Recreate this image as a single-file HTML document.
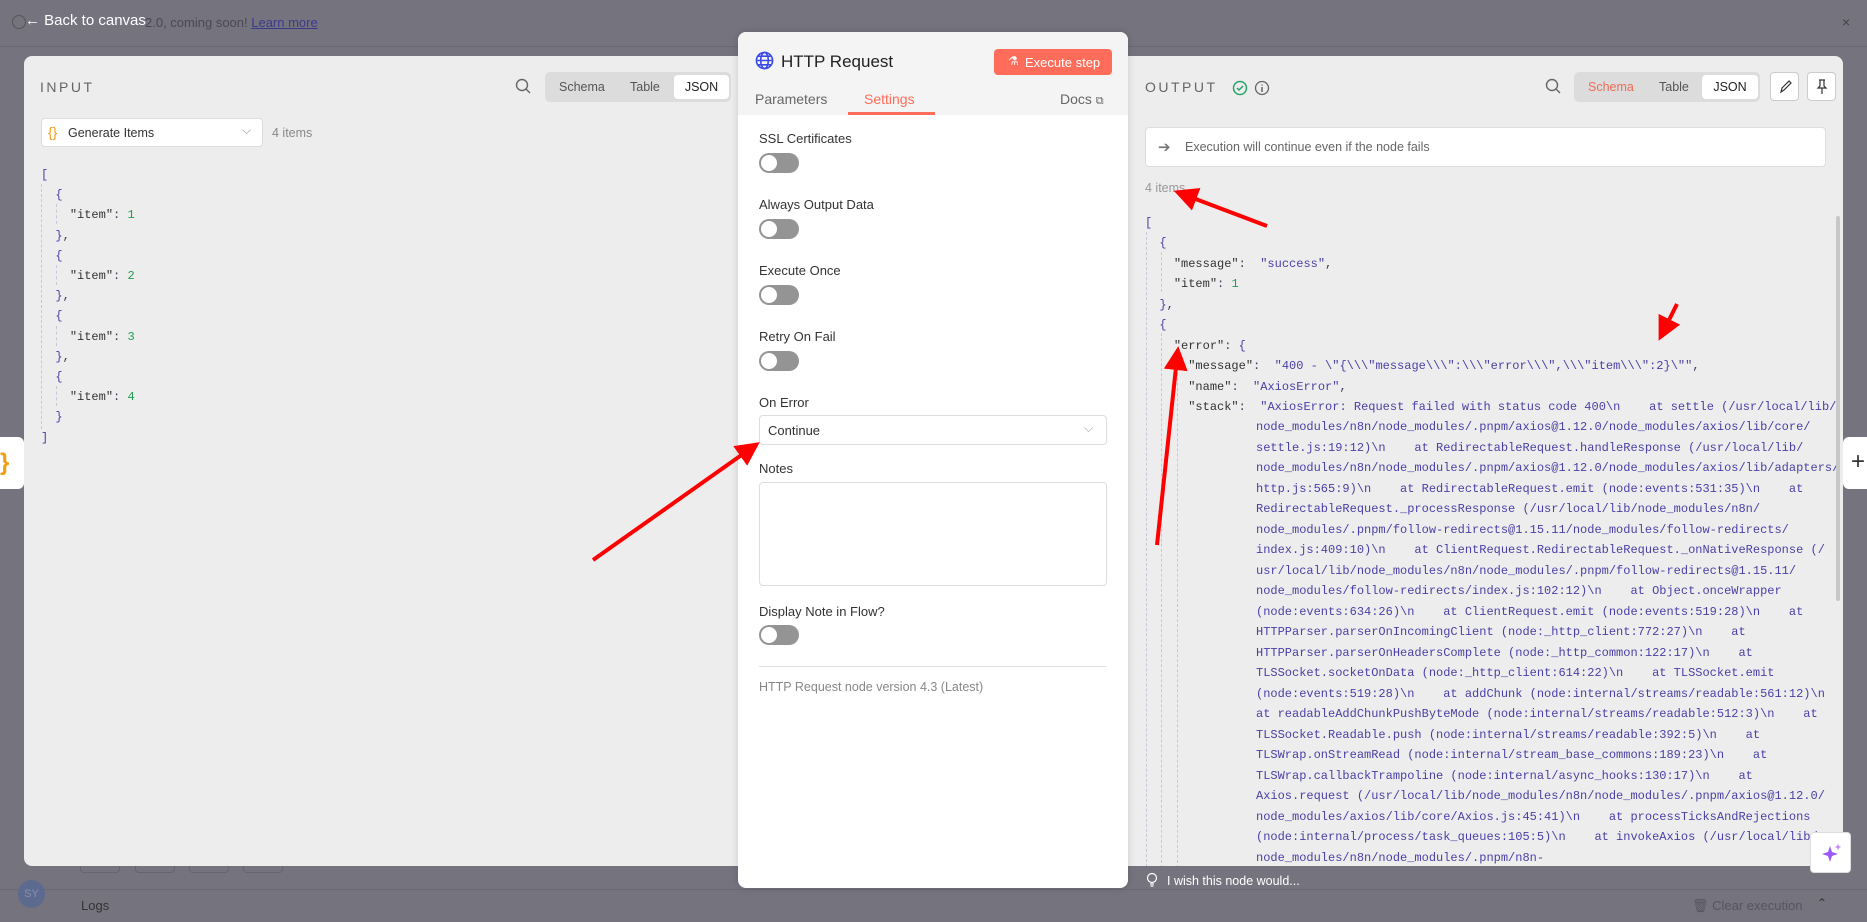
<!DOCTYPE html>
<html><head><meta charset="utf-8"><style>
*{box-sizing:border-box;margin:0;padding:0}
body{width:1867px;height:922px;overflow:hidden;background:#75737e;font-family:"Liberation Sans",sans-serif;position:relative;color:#333}
.a{position:absolute}
.mono{font-family:"Liberation Mono",monospace;font-size:12px;white-space:pre;color:#3d3d5c}
.p{color:#4a3fa6}.g{color:#1f9d55}.k{color:#333}
.tg{position:absolute;width:40px;height:20px;border-radius:10px;background:#949494}
.tg:after{content:"";position:absolute;left:2px;top:2px;width:16px;height:16px;border-radius:50%;background:#fff}
.lbl{position:absolute;left:21px;font-size:13px;color:#333}
.seg{position:absolute;height:30px;background:#dcdcdc;border-radius:5px;font-size:12.5px;color:#555}
.seg span{position:absolute;top:8px}
.seg .on{background:#fff;border-radius:4px;top:3px;height:24px;padding-top:5px;color:#222;text-align:center}
.dash{position:absolute;border-left:1px dashed #c5c8d6;width:0}
</style></head><body>
<div class="a" style="left:0;top:0;width:1867px;height:47px;border-bottom:1px solid #6a6873"></div>
<div class="a" style="left:12px;top:15px;width:14px;height:14px;border:1px solid #555;border-radius:50%"></div>
<div class="a" style="left:145px;top:15px;font-size:13px;color:#4a4855">2.0, coming soon! <span style="text-decoration:underline;color:#3b3a8a">Learn more</span></div>
<div class="a" style="left:25px;top:12px;font-size:15px;color:#fff">&#8592; Back to canvas</div>
<div class="a" style="left:1842px;top:14px;font-size:14px;color:#444">×</div>
<div class="a" style="left:0;top:437px;width:24px;height:52px;background:#fff;border-radius:0 6px 6px 0"><span style="position:absolute;left:0;top:12px;color:#f39c12;font-size:24px;font-weight:bold">}</span></div>
<div class="a" style="left:1843px;top:437px;width:24px;height:52px;background:#fff;border-radius:6px 0 0 6px"><span style="position:absolute;left:8px;top:11px;color:#333;font-size:24px">+</span></div>
<div class="a" style="left:0;top:889px;width:1867px;border-top:1px solid #6a6873"></div>
<div class="a" style="left:18px;top:880px;width:27px;height:28px;border-radius:50%;background:#5b6a8e;color:#8a8fb0;font-size:11px;text-align:center;line-height:28px">SY</div>
<div class="a" style="left:81px;top:898px;font-size:13px;color:#333">Logs</div>
<div class="a" style="left:1692px;top:898px;font-size:13px;color:#56545f">🗑 Clear execution</div>
<div class="a" style="left:1817px;top:896px;font-size:12px;color:#333">⌃</div>
<div class="a" style="left:80px;top:860px;width:40px;height:13px;border:1px solid #66646f;border-top:none;border-radius:0 0 4px 4px"></div>
<div class="a" style="left:135px;top:860px;width:40px;height:13px;border:1px solid #66646f;border-top:none;border-radius:0 0 4px 4px"></div>
<div class="a" style="left:189px;top:860px;width:40px;height:13px;border:1px solid #66646f;border-top:none;border-radius:0 0 4px 4px"></div>
<div class="a" style="left:243px;top:860px;width:40px;height:13px;border:1px solid #66646f;border-top:none;border-radius:0 0 4px 4px"></div>

<div class="a" style="left:24px;top:56px;width:720px;height:810px;background:#ededed;border-radius:8px 0 0 8px;overflow:hidden">
  <div class="a" style="left:16px;top:23px;font-size:14px;letter-spacing:2.5px;color:#666">INPUT</div>
  <svg class="a" style="left:491px;top:22px" width="16" height="16" viewBox="0 0 16 16"><circle cx="7" cy="7" r="5.5" fill="none" stroke="#666" stroke-width="1.4"/><path d="M11 11l4 4" stroke="#666" stroke-width="1.4"/></svg>
  <div class="seg" style="left:521px;top:16px;width:186px"><span style="left:14px">Schema</span><span style="left:85px">Table</span><span class="on" style="left:129px;width:55px">JSON</span></div>
  <div class="a" style="left:17px;top:62px;width:222px;height:29px;background:#fff;border:1px solid #ddd;border-radius:4px">
    <span class="a" style="left:6px;top:5px;color:#f39c12;font-size:14px">{}</span>
    <span class="a" style="left:26px;top:7px;font-size:12.5px;color:#333">Generate Items</span>
    <span class="a" style="left:200px;top:4px;color:#999;font-size:12px">⌵</span>
  </div>
  <div class="a" style="left:248px;top:70px;font-size:12.5px;color:#888">4 items</div>
  <div class="dash" style="left:17px;top:128px;height:245px"></div>
  <div class="dash" style="left:32px;top:148px;height:20px"></div>
  <div class="dash" style="left:32px;top:209px;height:20px"></div>
  <div class="dash" style="left:32px;top:270px;height:20px"></div>
  <div class="dash" style="left:32px;top:330px;height:20px"></div>
  <div class="a mono" style="left:17px;top:109px;line-height:20.2px"><span class="p">[</span>
  <span class="p">{</span>
    <span class="k">"item"</span>: <span class="g">1</span>
  <span class="p">}</span>,
  <span class="p">{</span>
    <span class="k">"item"</span>: <span class="g">2</span>
  <span class="p">}</span>,
  <span class="p">{</span>
    <span class="k">"item"</span>: <span class="g">3</span>
  <span class="p">}</span>,
  <span class="p">{</span>
    <span class="k">"item"</span>: <span class="g">4</span>
  <span class="p">}</span>
<span class="p">]</span></div>
</div>

<div class="a" style="left:1128px;top:56px;width:715px;height:810px;background:#ededed;border-radius:0 8px 0 0;overflow:hidden">
  <div class="a" style="left:17px;top:23px;font-size:14px;letter-spacing:2.5px;color:#666">OUTPUT</div>
  <svg class="a" style="left:104px;top:24px" width="16" height="16"><circle cx="8" cy="8" r="6.5" fill="none" stroke="#29a36a" stroke-width="1.5"/><path d="M5 8l2 2 4-4" fill="none" stroke="#29a36a" stroke-width="1.5"/></svg>
  <svg class="a" style="left:126px;top:24px" width="16" height="16"><circle cx="8" cy="8" r="6.5" fill="none" stroke="#666" stroke-width="1.3"/><path d="M8 7v5M8 4.5v1" stroke="#666" stroke-width="1.5"/></svg>
  <svg class="a" style="left:417px;top:22px" width="16" height="16" viewBox="0 0 16 16"><circle cx="7" cy="7" r="5.5" fill="none" stroke="#666" stroke-width="1.4"/><path d="M11 11l4 4" stroke="#666" stroke-width="1.4"/></svg>
  <div class="seg" style="left:446px;top:16px;width:186px"><span style="left:14px;color:#f06a55">Schema</span><span style="left:85px">Table</span><span class="on" style="left:128px;width:56px">JSON</span></div>
  <div class="a" style="left:642px;top:16px;width:29px;height:29px;border:1px solid #ccc;border-radius:4px;background:#fff"><svg class="a" style="left:7px;top:6px" width="14" height="16"><path d="M3 13l1-4 7-7 2 2-7 7z" fill="none" stroke="#333" stroke-width="1.2"/></svg></div>
  <div class="a" style="left:679px;top:16px;width:29px;height:29px;border:1px solid #ccc;border-radius:4px;background:#fff"><svg class="a" style="left:7px;top:6px" width="14" height="16"><path d="M4 1h6M5 1v6l-2 2h8l-2-2V1M7 9v6" fill="none" stroke="#333" stroke-width="1.2"/></svg></div>
  <div class="a" style="left:17px;top:71px;width:681px;height:40px;background:#fff;border:1px solid #ddd;border-radius:4px">
    <span class="a" style="left:12px;top:10px;color:#777;font-size:15px">➔</span>
    <span class="a" style="left:39px;top:12px;font-size:12.5px;color:#666">Execution will continue even if the node fails</span>
  </div>
  <div class="a" style="left:17px;top:125px;font-size:12.5px;color:#999">4 items</div>
  <div class="dash" style="left:18px;top:176px;height:640px"></div>
  <div class="dash" style="left:33px;top:196px;height:40px"></div>
  <div class="dash" style="left:33px;top:277px;height:540px"></div>
  <div class="dash" style="left:49px;top:297px;height:520px"></div>
  <div class="a mono" style="left:17px;top:157px;line-height:20.45px"><span class="p">[</span>
  <span class="p">{</span>
    <span class="k">"message"</span>:  <span class="p">"success"</span>,
    <span class="k">"item"</span>: <span class="g">1</span>
  <span class="p">}</span>,
  <span class="p">{</span>
    <span class="k">"error"</span>: <span class="p">{</span>
      <span class="k">"message"</span>:  <span class="p">"400 - \"{\\\"message\\\":\\\"error\\\",\\\"item\\\":2}\""</span>,
      <span class="k">"name"</span>:  <span class="p">"AxiosError"</span>,
      <span class="k">"stack"</span>:  <span class="p">"AxiosError: Request failed with status code 400\n    at settle (/usr/local/lib/</span></div>
  <div class="a mono p" style="left:128px;top:361px;line-height:20.5px">node_modules/n8n/node_modules/.pnpm/axios@1.12.0/node_modules/axios/lib/core/
settle.js:19:12)\n    at RedirectableRequest.handleResponse (/usr/local/lib/
node_modules/n8n/node_modules/.pnpm/axios@1.12.0/node_modules/axios/lib/adapters/
http.js:565:9)\n    at RedirectableRequest.emit (node:events:531:35)\n    at
RedirectableRequest._processResponse (/usr/local/lib/node_modules/n8n/
node_modules/.pnpm/follow-redirects@1.15.11/node_modules/follow-redirects/
index.js:409:10)\n    at ClientRequest.RedirectableRequest._onNativeResponse (/
usr/local/lib/node_modules/n8n/node_modules/.pnpm/follow-redirects@1.15.11/
node_modules/follow-redirects/index.js:102:12)\n    at Object.onceWrapper
(node:events:634:26)\n    at ClientRequest.emit (node:events:519:28)\n    at
HTTPParser.parserOnIncomingClient (node:_http_client:772:27)\n    at
HTTPParser.parserOnHeadersComplete (node:_http_common:122:17)\n    at
TLSSocket.socketOnData (node:_http_client:614:22)\n    at TLSSocket.emit
(node:events:519:28)\n    at addChunk (node:internal/streams/readable:561:12)\n
at readableAddChunkPushByteMode (node:internal/streams/readable:512:3)\n    at
TLSSocket.Readable.push (node:internal/streams/readable:392:5)\n    at
TLSWrap.onStreamRead (node:internal/stream_base_commons:189:23)\n    at
TLSWrap.callbackTrampoline (node:internal/async_hooks:130:17)\n    at
Axios.request (/usr/local/lib/node_modules/n8n/node_modules/.pnpm/axios@1.12.0/
node_modules/axios/lib/core/Axios.js:45:41)\n    at processTicksAndRejections
(node:internal/process/task_queues:105:5)\n    at invokeAxios (/usr/local/lib/
node_modules/n8n/node_modules/.pnpm/n8n-</div>
  <div class="a" style="left:708px;top:160px;width:4px;height:385px;background:#c8c8c8;border-radius:2px"></div>
</div>
<svg class="a" style="left:1146px;top:872px" width="12" height="16"><circle cx="6" cy="6" r="4.5" fill="none" stroke="#fff" stroke-width="1.2"/><path d="M4 12h4M4.5 14h3" stroke="#fff" stroke-width="1.2"/></svg>
<div class="a" style="left:1167px;top:874px;font-size:12.5px;color:#fff">I wish this node would...</div>
<div class="a" style="left:1810px;top:832px;width:41px;height:41px;background:#fff;border-radius:4px;border:1px solid #ddd"><svg class="a" style="left:10px;top:10px" width="22" height="22"><path d="M9 3l2 6 6 2-6 2-2 6-2-6-6-2 6-2z" fill="#9b59f5"/><path d="M17 1l1 2 2 1-2 1-1 2-1-2-2-1 2-1z" fill="#c08cf7"/></svg></div>

<div class="a" style="left:738px;top:32px;width:390px;height:856px;background:#fff;border-radius:8px;overflow:hidden;box-shadow:0 0 8px rgba(0,0,0,.15)">
  <div class="a" style="left:0;top:0;width:390px;height:83px;background:#f4f4f4"></div>
  <svg class="a" style="left:17px;top:19px" width="19" height="19" viewBox="0 0 20 20"><g fill="none" stroke="#3b4be8" stroke-width="1.7"><circle cx="10" cy="10" r="8.5"/><ellipse cx="10" cy="10" rx="4" ry="8.5"/><path d="M1.5 10h17M3 5.5h14M3 14.5h14"/></g></svg>
  <div class="a" style="left:43px;top:20px;font-size:17px;color:#222">HTTP Request</div>
  <div class="a" style="left:256px;top:17px;width:118px;height:26px;background:#ff6d5a;border-radius:4px;color:#fff;font-size:13px;padding:6px 0 0 31px">Execute step<span class="a" style="left:14px;top:5px;font-size:12px">⚗</span></div>
  <div class="a" style="left:17px;top:59px;font-size:14px;color:#666">Parameters</div>
  <div class="a" style="left:126px;top:59px;font-size:14px;color:#ff6d5a">Settings</div>
  <div class="a" style="left:110px;top:80px;width:87px;height:3px;background:#ff6d5a"></div>
  <div class="a" style="left:322px;top:59px;font-size:14px;color:#666">Docs <span style="font-size:11px">⧉</span></div>
  <div class="lbl" style="top:99px">SSL Certificates</div><div class="tg" style="left:21px;top:121px"></div>
  <div class="lbl" style="top:165px">Always Output Data</div><div class="tg" style="left:21px;top:187px"></div>
  <div class="lbl" style="top:231px">Execute Once</div><div class="tg" style="left:21px;top:253px"></div>
  <div class="lbl" style="top:297px">Retry On Fail</div><div class="tg" style="left:21px;top:319px"></div>
  <div class="lbl" style="top:363px">On Error</div>
  <div class="a" style="left:21px;top:383px;width:348px;height:30px;border:1px solid #ddd;border-radius:4px;font-size:13px;color:#333;padding:7px 0 0 8px">Continue<span class="a" style="left:324px;top:5px;color:#aaa;font-size:12px">⌵</span></div>
  <div class="lbl" style="top:429px">Notes</div>
  <div class="a" style="left:21px;top:450px;width:348px;height:104px;border:1px solid #ddd;border-radius:4px"></div>
  <div class="lbl" style="top:572px">Display Note in Flow?</div><div class="tg" style="left:21px;top:593px"></div>
  <div class="a" style="left:21px;top:634px;width:348px;border-top:1px solid #e2e2e2"></div>
  <div class="a" style="left:21px;top:648px;font-size:12.5px;color:#888">HTTP Request node version 4.3 (Latest)</div>
</div>

<svg class="a" style="left:0;top:0" width="1867" height="922">
<defs><marker id="m" markerWidth="6" markerHeight="6" refX="3" refY="3" orient="auto"><path d="M0 0L6 3L0 6z" fill="#f00"/></marker></defs>
<g stroke="#f00" stroke-width="4" fill="none" marker-end="url(#m)">
<path d="M593 560L750 449"/>
<path d="M1267 226L1185 195"/>
<path d="M1677 304L1664 330"/>
<path d="M1157 545L1177 358"/>
</g></svg>
</body></html>
